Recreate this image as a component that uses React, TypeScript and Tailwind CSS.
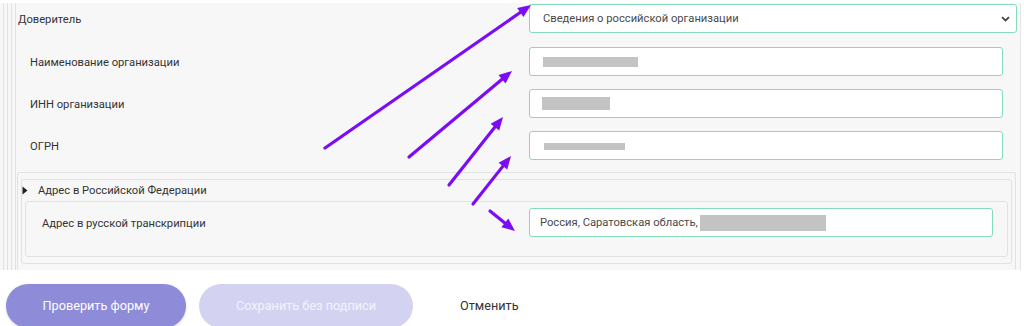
import React from "react";

const arrows: [number, number, number, number][] = [
  [325, 148, 531, 5],
  [409, 157, 512, 71],
  [449, 185, 503, 117],
  [473, 204, 511, 156],
  [490, 211, 515, 231],
];

function Arrow({ a }: { a: [number, number, number, number] }) {
  const [x1, y1, x2, y2] = a;
  const dx = x2 - x1;
  const dy = y2 - y1;
  const len = Math.hypot(dx, dy);
  const ux = dx / len;
  const uy = dy / len;
  const hl = 13;
  const hw = 5.5;
  const bx = x2 - ux * hl;
  const by = y2 - uy * hl;
  const px = -uy;
  const py = ux;
  const pts = `${x2},${y2} ${bx + px * hw},${by + py * hw} ${bx - px * hw},${by - py * hw}`;
  return (
    <g>
      <line x1={x1} y1={y1} x2={bx + ux * 2} y2={by + uy * 2} stroke="#7b0cf5" strokeWidth={3.2} strokeLinecap="round" />
      <polygon points={pts} fill="#7b0cf5" />
    </g>
  );
}

function Field({ children }: { children?: React.ReactNode }) {
  return (
    <div className="h-[29px] w-[474px] rounded-[3px] border border-[#84ddb8] bg-white flex items-center">
      {children}
    </div>
  );
}

export default function App() {
  return (
    <div className="relative w-[1024px] h-[326px] bg-white overflow-hidden text-[11.2px] text-[#333] font-['Roboto','Noto_Sans',sans-serif]">
      <div className="mt-[3px] mr-[3px] h-[267px] bg-[#f7f7f7] border-r border-[#e6e6e6] flex">
        <div className="ml-[3px] border-l border-[#e2e2e2] flex-1 flex">
          <div className="ml-[3px] border-l border-[#e2e2e2] flex-1 flex">
            <div className="ml-[3px] border-l border-[#e2e2e2] flex-1 flex">
              <div className="ml-[3px] border-l border-[#e2e2e2] flex-1 flex flex-col pr-[3px]">
                {/* Доверитель */}
                <div className="mt-[1px] h-[29px] flex items-center pl-[2px]">
                  <span className="w-[511px] pt-[3px]">Доверитель</span>
                  <div className="h-[29px] flex-1 rounded-[3px] border border-[#84ddb8] bg-white flex items-center justify-between pl-[13px] pr-[6px] text-[#4a4a4a]">
                    <span className="pt-[2px]">Сведения о российской организации</span>
                    <svg width="9" height="6" viewBox="0 0 9 6">
                      <path d="M1 1.2 L4.5 4.5 L8 1.2" fill="none" stroke="#444" strokeWidth="1.8" />
                    </svg>
                  </div>
                </div>
                {/* inner rows */}
                <div className="flex flex-col gap-[13px] mt-[14px] pl-[14px]">
                  <div className="flex items-center">
                    <span className="w-[499px] pt-[3px]">Наименование организации</span>
                    <Field>
                      <div className="ml-[13px] w-[95px] h-[10px] bg-[#c3c3c3]" />
                    </Field>
                  </div>
                  <div className="flex items-center">
                    <span className="w-[499px] pt-[3px]">ИНН организации</span>
                    <Field>
                      <div className="ml-[12px] w-[68px] h-[13px] bg-[#c3c3c3]" />
                    </Field>
                  </div>
                  <div className="flex items-center">
                    <span className="w-[499px] pt-[3px]">ОГРН</span>
                    <Field>
                      <div className="ml-[14px] w-[81px] h-[7px] mt-[2px] bg-[#c3c3c3]" />
                    </Field>
                  </div>
                </div>
                {/* address */}
                <div className="mt-[12px] ml-[1px] mr-[1px] flex-1 rounded-t-[3px] border border-b-0 border-[#e2e2e2] pt-[6px] px-[3px]">
                  <div className="h-[85px] rounded-[3px] border border-[#e2e2e2] pr-[3px]">
                    <div className="h-[21px] flex items-center">
                      <svg width="6" height="9" viewBox="0 0 6 9" className="mr-[10px]">
                        <path d="M0.5 0.5 L5.5 4.5 L0.5 8.5 Z" fill="#222" />
                      </svg>
                      <span className="pt-[2px]">Адрес в Российской Федерации</span>
                    </div>
                    <div className="ml-[3px] h-[56px] rounded-[3px] border border-[#e2e2e2] pt-[6px] pl-[16px] flex">
                      <span className="w-[487px] h-[29px] flex items-center pt-[3px]">Адрес в русской транскрипции</span>
                      <div className="h-[29px] w-[464px] rounded-[3px] border border-[#84ddb8] bg-white flex items-center pl-[10px] text-[#4a4a4a]">
                        <span className="pt-[2px]">Россия, Саратовская область,</span>
                        <div className="ml-[2px] w-[126px] h-[16px] bg-[#c3c3c3]" />
                      </div>
                    </div>
                  </div>
                </div>
              </div>
            </div>
          </div>
        </div>
      </div>
      <div className="flex items-center mt-[14px] pl-[6px] text-[12.7px]">
        <button className="w-[180px] h-[44px] rounded-full bg-[#8e8bd9] text-white shadow-[0_1px_3px_rgba(0,0,0,0.15)]">
          Проверить форму
        </button>
        <button className="ml-[13px] w-[214px] h-[44px] rounded-full bg-[#d4d2f1] text-[#f3f2fc]">
          Сохранить без подписи
        </button>
        <span className="ml-[47px] text-[#333]">Отменить</span>
      </div>
      <svg className="absolute left-0 top-0 pointer-events-none" width="1024" height="326">
        {arrows.map((a, i) => (
          <Arrow key={i} a={a} />
        ))}
      </svg>
    </div>
  );
}
